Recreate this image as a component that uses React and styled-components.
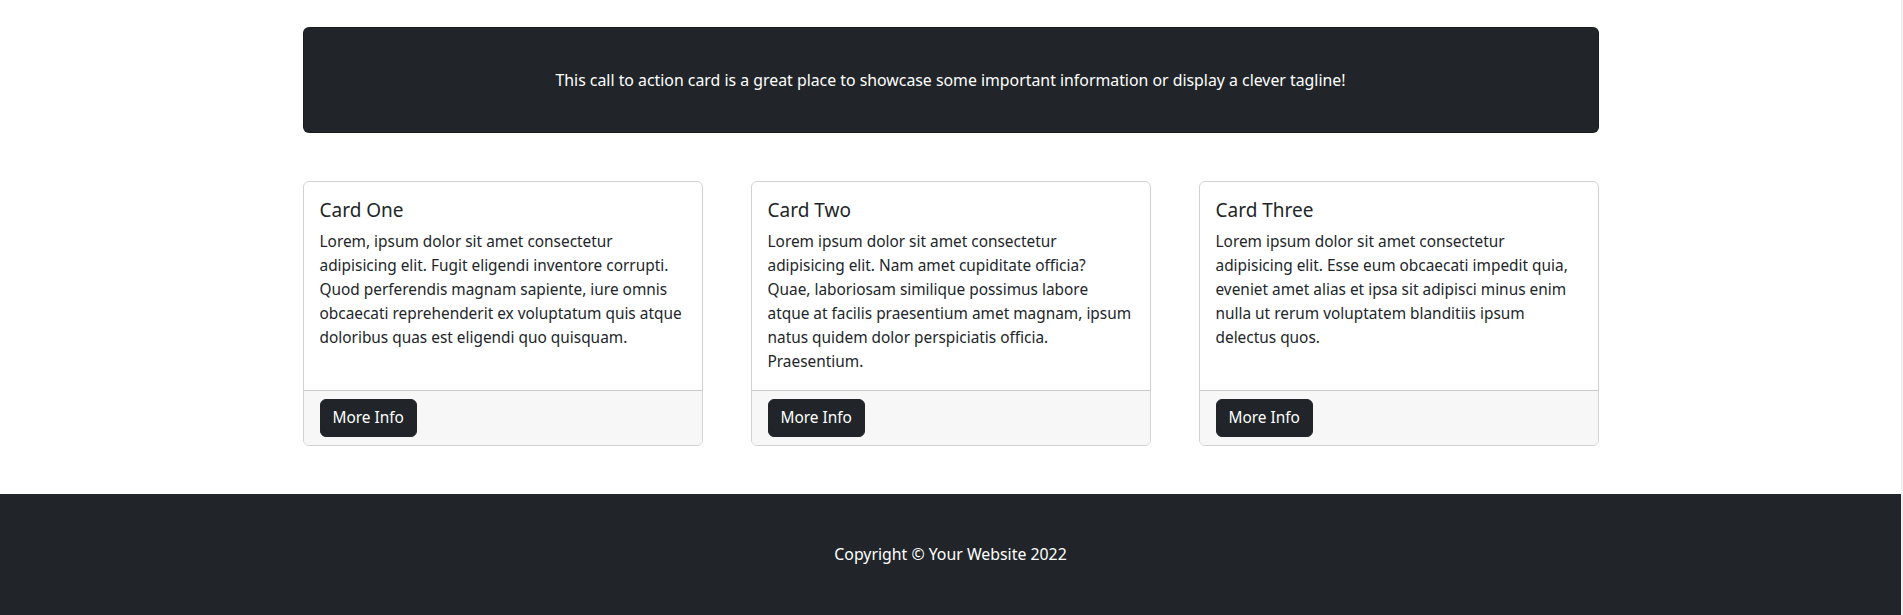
import React from "react";
import styled, { createGlobalStyle } from "styled-components";

const GlobalStyle = createGlobalStyle`
  html {
    background: #f0f0f0;
  }
  body {
    margin: 0 2px 0 0;
    font-family: "Noto Sans", "Open Sans", sans-serif;
    font-size: 15.4px;
    line-height: 24px;
    color: #212529;
    background: #fff;
  }
`;

const Container = styled.div`
  max-width: 1296px;
  margin: 0 auto;
  padding: 0 12px;
`;

const CallToAction = styled.div`
  margin: 27px 0 48px;
  padding: 40px 16px;
  background: #212529;
  border: 1px solid rgba(0, 0, 0, 0.175);
  border-radius: 6px;
  text-align: center;
`;

const LightText = styled.p`
  margin: 0;
  color: #fff;
  font-size: 15.85px;
  text-align: center;
`;

const CardRow = styled.div`
  display: grid;
  grid-template-columns: repeat(3, 1fr);
  column-gap: 48px;
  margin-bottom: 48px;
`;

const Card = styled.div`
  display: flex;
  flex-direction: column;
  border: 1px solid rgba(0, 0, 0, 0.175);
  border-radius: 6px;
  overflow: hidden;
`;

const CardBody = styled.div`
  flex: 1;
  padding: 16px;
`;

const CardTitle = styled.h2`
  margin: 0 0 8px;
  font-size: 19px;
  font-weight: 400;
  line-height: 24px;
`;

const CardText = styled.p`
  margin: 0;
`;

const Line = styled.span`
  display: block;
  white-space: nowrap;
`;

const CardFooter = styled.div`
  padding: 8px 16px;
  background: #f7f7f7;
  border-top: 1px solid rgba(0, 0, 0, 0.175);
`;

const Button = styled.a`
  display: inline-block;
  padding: 6px 12px;
  border: 1px solid #212529;
  border-radius: 6px;
  background: #212529;
  color: #fff;
  font-size: 15.4px;
  line-height: 24px;
  text-decoration: none;
  cursor: pointer;
`;

const Footer = styled.footer`
  padding: 48px 0 50px;
  background: #212529;
`;

const cards = [
  {
    title: "Card One",
    lines: [
      "Lorem, ipsum dolor sit amet consectetur",
      "adipisicing elit. Fugit eligendi inventore corrupti.",
      "Quod perferendis magnam sapiente, iure omnis",
      "obcaecati reprehenderit ex voluptatum quis atque",
      "doloribus quas est eligendi quo quisquam.",
    ],
  },
  {
    title: "Card Two",
    lines: [
      "Lorem ipsum dolor sit amet consectetur",
      "adipisicing elit. Nam amet cupiditate officia?",
      "Quae, laboriosam similique possimus labore",
      "atque at facilis praesentium amet magnam, ipsum",
      "natus quidem dolor perspiciatis officia.",
      "Praesentium.",
    ],
  },
  {
    title: "Card Three",
    lines: [
      "Lorem ipsum dolor sit amet consectetur",
      "adipisicing elit. Esse eum obcaecati impedit quia,",
      "eveniet amet alias et ipsa sit adipisci minus enim",
      "nulla ut rerum voluptatem blanditiis ipsum",
      "delectus quos.",
    ],
  },
];

const App = () => {
  return (
    <>
      <GlobalStyle />
      <Container>
        <CallToAction>
          <LightText>
            This call to action card is a great place to showcase some important information or display a clever tagline!
          </LightText>
        </CallToAction>
        <CardRow>
          {cards.map((card) => (
            <Card key={card.title}>
              <CardBody>
                <CardTitle>{card.title}</CardTitle>
                <CardText>
                  {card.lines.map((line) => (
                    <Line key={line}>{line}</Line>
                  ))}
                </CardText>
              </CardBody>
              <CardFooter>
                <Button href="#!">More Info</Button>
              </CardFooter>
            </Card>
          ))}
        </CardRow>
      </Container>
      <Footer>
        <Container>
          <LightText>Copyright &copy; Your Website 2022</LightText>
        </Container>
      </Footer>
    </>
  );
};

export default App;
